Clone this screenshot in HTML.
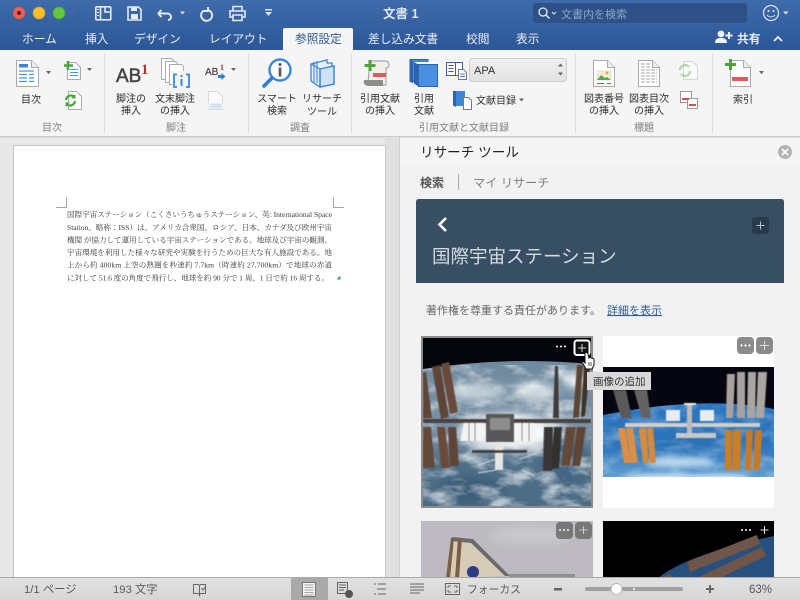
<!DOCTYPE html>
<html lang="ja"><head><meta charset="utf-8"><title>文書 1</title>
<style>
html,body{margin:0;padding:0;background:#fff}
body{width:800px;height:600px;overflow:hidden}
svg{display:block}
text{font-family:"Liberation Sans","Noto Sans CJK JP",sans-serif}
.t{font-size:11.7px;fill:#e9eef6}
.r{font-size:10px;fill:#2c2c2c;text-anchor:middle}
.g{font-size:10px;fill:#808080;text-anchor:middle}
.d{font-family:"Liberation Serif","Noto Serif CJK SC",serif;font-size:7.6px;fill:#3a3a3a}
.s{font-size:11.300px;fill:#5c5c5c}
</style></head><body>
<svg width="800" height="600" viewBox="0 0 800 600" xmlns="http://www.w3.org/2000/svg">
<defs>
<linearGradient id="tb" x1="0" y1="0" x2="0" y2="1"><stop offset="0" stop-color="#3f6bab"/><stop offset="1" stop-color="#2c5797"/></linearGradient>
<linearGradient id="st" x1="0" y1="0" x2="0" y2="1"><stop offset="0" stop-color="#e2e2e2"/><stop offset="1" stop-color="#d6d6d6"/></linearGradient>
<linearGradient id="sel" x1="0" y1="0" x2="0" y2="1"><stop offset="0" stop-color="#f0f0f0"/><stop offset="1" stop-color="#e2e2e2"/></linearGradient>
<linearGradient id="earth1" x1="0" y1="0" x2="0" y2="1"><stop offset="0" stop-color="#6b879d"/><stop offset=".55" stop-color="#7a92a6"/><stop offset=".75" stop-color="#4f7089"/><stop offset="1" stop-color="#4c6c85"/></linearGradient>
<linearGradient id="earth2" x1="0" y1="0" x2="0" y2="1"><stop offset="0" stop-color="#2a78c6"/><stop offset=".7" stop-color="#2b72b8"/><stop offset="1" stop-color="#5f9dd2"/></linearGradient>
<filter id="b3" x="-30%" y="-30%" width="160%" height="160%"><feGaussianBlur stdDeviation="3"/></filter>
<filter id="b5" x="-30%" y="-30%" width="160%" height="160%"><feGaussianBlur stdDeviation="5"/></filter>
<filter id="b1"><feGaussianBlur stdDeviation=".5"/></filter>
<filter id="cl" x="0" y="0" width="100%" height="100%" color-interpolation-filters="sRGB"><feTurbulence type="fractalNoise" baseFrequency=".035 .07" numOctaves="4" seed="7"/><feColorMatrix type="matrix" values="0 0 0 0 1  0 0 0 0 1  0 0 0 0 1  3 0 0 0 -1.300"/></filter>
<clipPath id="c1"><rect x="423" y="338" width="168" height="168"/></clipPath>
<clipPath id="c2"><rect x="603" y="367" width="171" height="110"/></clipPath>
<clipPath id="c3"><rect x="421" y="521" width="172" height="57"/></clipPath>
<clipPath id="c4"><rect x="603" y="521" width="171" height="57"/></clipPath>
</defs>

<!-- window backgrounds -->
<rect width="800" height="600" fill="#e8e8e8"/>
<rect x="0" y="0" width="800" height="50" fill="url(#tb)"/>
<rect x="0" y="50" width="800" height="86" fill="#f5f5f5"/>
<rect x="0" y="136" width="800" height="1.500" fill="#cbcbcb"/>
<!-- doc page -->
<rect x="385" y="137" width="15" height="441" fill="#e0e0e0"/>
<rect x="13.500" y="145.500" width="372" height="440" fill="#fff" stroke="#c6c6c6"/>
<!-- crop marks -->
<path d="M56 207.500H66.500V197M333.500 197V207.500H344" fill="none" stroke="#a8a8a8"/>
<!-- doc text -->
<text class="d" x="67" y="217" textLength="265">国際宇宙ステーション（こくさいうちゅうステーション、英: International Space</text>
<text class="d" x="67" y="230" textLength="265">Station、略称：ISS）は、アメリカ合衆国、ロシア、日本、カナダ及び欧州宇宙</text>
<text class="d" x="67" y="242.500" textLength="265">機関 が協力して運用している宇宙ステーションである。地球及び宇宙の観測、</text>
<text class="d" x="67" y="255" textLength="265">宇宙環境を利用した様々な研究や実験を行うための巨大な有人施設である。地</text>
<text class="d" x="67" y="267.500" textLength="265">上から約 400km 上空の熱圏を秒速約 7.7km（時速約 27,700km）で地球の赤道</text>
<text class="d" x="67" y="280.500" textLength="262">に対して 51.6 度の角度で飛行し、地球を約 90 分で 1 周、1 日で約 16 周する。</text>
<path d="M337 279h3v-3M340 279l-2-2" fill="none" stroke="#2f7fd0" stroke-width=".9"/>

<!-- title bar -->
<circle cx="19" cy="13" r="6" fill="#ee5f57" stroke="#cf4a44" stroke-width=".6"/><circle cx="19" cy="13" r="2" fill="#5f0f0c"/>
<circle cx="39" cy="13" r="6" fill="#f9bd2f" stroke="#d99f22" stroke-width=".6"/>
<circle cx="59" cy="13" r="6" fill="#5fc83e" stroke="#47a42c" stroke-width=".6"/>
<path d="M78.500 5V22" stroke="#3a6098"/>
<g fill="none" stroke="#e4e9f2" stroke-width="1.600">
<rect x="95.800" y="6.800" width="15" height="13" rx="1"/><path d="M100.500 7v13M105 7.500v4.500h5.500"/>
<path d="M128 7h10.500l2.500 2.500V20h-13z"/>
<path d="M158 13.500l3.500-3.500M158 13.500l3.500 3.500M158 13.500h9c5 0 5.500 6 1 6.500" stroke-width="1.900"/>
<path d="M204 10.500a5.500 5.500 0 1 0 4-.500M208 7v4h-4" stroke-width="1.900"/>
<path d="M233 11V6.500h9V11M233 17h-3v-6h15v6h-3M233 15h9v5.500h-9z"/>
</g>
<path d="M97 9.500h2M97 12.500h2M97 15.500h2" stroke="#e4e9f2"/>
<rect x="131" y="7" width="6" height="4" fill="#e4e9f2"/><rect x="131" y="14" width="7" height="5" fill="#e4e9f2"/>
<path d="M180 11.500h5l-2.500 3zM265 9h7v1.500h-7zM265 12h7l-3.500 4z" fill="#dbe2ee"/>
<text x="383" y="18" font-size="12.500" font-weight="bold" fill="#dfe6f2">文書 1</text>
<rect x="533" y="3" width="214" height="20" rx="3" fill="#2e5288"/>
<circle cx="543" cy="12" r="4" fill="none" stroke="#e4e9f2" stroke-width="1.300"/><path d="M546 15l3.500 3.500" stroke="#e4e9f2" stroke-width="1.500"/>
<path d="M552 12l2 2 2-2" fill="none" stroke="#e4e9f2"/>
<text x="561" y="18" font-size="11" fill="#8ea4c6">文書内を検索</text>
<circle cx="771" cy="13" r="7.500" fill="none" stroke="#dfe6f2" stroke-width="1.200"/>
<circle cx="768.500" cy="11" r="1" fill="#dfe6f2"/><circle cx="773.500" cy="11" r="1" fill="#dfe6f2"/>
<path d="M767 15c2 2.500 6 2.500 8 0" fill="none" stroke="#dfe6f2"/>
<path d="M783 11.500h5.500l-2.750 3z" fill="#dfe6f2"/>

<!-- tabs -->
<path d="M283 50V30q0-2 2-2h66q2 0 2 2v20z" fill="#f5f5f5"/>
<text class="t" x="22" y="43">ホーム</text>
<text class="t" x="85" y="43">挿入</text>
<text class="t" x="134" y="43">デザイン</text>
<text class="t" x="209" y="43">レイアウト</text>
<text x="295" y="43" font-size="11.700" fill="#2c5797">参照設定</text>
<text class="t" x="368" y="43">差し込み文書</text>
<text class="t" x="466" y="43">校閲</text>
<text class="t" x="516" y="43">表示</text>
<circle cx="721" cy="34" r="3.400" fill="#f0f3f8"/><path d="M715 43c0-4 2.500-5 6-5s6 1 6 5z" fill="#f0f3f8"/>
<path d="M729 33h2v2.500h2.500v2H731v2.500h-2v-2.500h-2.500v-2H729z" fill="#f0f3f8" transform="translate(-1,-1)"/>
<text class="t" x="737" y="43" font-weight="bold">共有</text>
<path d="M774 41l4-4 4 4" fill="none" stroke="#f0f3f8" stroke-width="1.800"/>

<!-- ribbon dividers -->
<path d="M104.500 54V133M248.500 54V133M351.500 54V133M575.500 54V133M712.500 54V133" stroke="#dddddd"/>

<!-- 目次 -->
<path d="M16.500 60.500h15l7 7v19h-22z" fill="#fff" stroke="#aaa"/><path d="M31.500 60.500v7h7" fill="#eee" stroke="#aaa"/>
<rect x="19" y="64" width="9" height="3.500" fill="#3b86dc"/>
<path d="M19 71h15M19 74.500h8M29 74.500h5M19 78h8M29 78h5M19 81.500h8M29 81.500h5" stroke="#4b93e3" stroke-width="1.200"/>
<path d="M46 71h5l-2.500 3.200z" fill="#666"/>
<path d="M67.500 62.500h8l5 5v12h-13z" fill="#fff" stroke="#aaa"/>
<path d="M70 69.500h8M70 72.500h8M70 75.500h8" stroke="#4b93e3"/>
<path d="M68 61v9M64 65.500h9" stroke="#4ca33e" stroke-width="2.500"/>
<path d="M87 68h5l-2.500 3z" fill="#666"/>
<path d="M68.500 91.500h8l5 5v13h-13z" fill="#fff" stroke="#aaa"/>
<path d="M66 100a5 5 0 0 1 8.500-3M75 101a5 5 0 0 1-8.500 3" fill="none" stroke="#4ca33e" stroke-width="2.200"/>
<path d="M75.500 94v4.500H71M65.500 107v-4.500H70" fill="#4ca33e"/>
<text class="r" x="31" y="103" font-size="10">目次</text>
<text class="g" x="52" y="131">目次</text>

<!-- 脚注 -->
<text x="116" y="82" font-size="19" fill="#444" stroke="#444" stroke-width=".5" style="font-family:'Liberation Sans',sans-serif">AB</text>
<text x="141" y="74" font-size="15" font-weight="bold" fill="#a83a35" style="font-family:'Liberation Serif',serif">1</text>
<text class="r" x="131" y="102">脚注の</text><text class="r" x="131" y="114">挿入</text>
<g fill="#fff" stroke="#aaa"><path d="M161.500 58.500h10l2 2v19h-12z"/><path d="M165.500 61.500h10l2 2v19h-12z"/><path d="M169.500 64.500h12l2 2v18h-14z"/></g>
<rect x="172" y="71" width="18" height="18" fill="#f5f5f5"/>
<path d="M177 74.500h-3v12.500h3M186 74.500h3v12.500h-3" fill="none" stroke="#3b86dc" stroke-width="1.800"/>
<path d="M181.500 75v2M181.500 79v7" stroke="#3b86dc" stroke-width="2"/>
<text class="r" x="175" y="102">文末脚注</text><text class="r" x="175" y="114">の挿入</text>
<text x="205" y="75" font-size="10" fill="#444" stroke="#444" stroke-width=".2" style="font-family:'Liberation Sans',sans-serif">AB</text>
<text x="220" y="70" font-size="8" font-weight="bold" fill="#a83a35" style="font-family:'Liberation Serif',serif">1</text>
<path d="M218 75h3.500v-2l4 3.500-4 3.500v-2H218z" fill="#2f7fd8"/>
<path d="M231 68h5l-2.500 3z" fill="#666"/>
<path d="M208.500 91.500h9l5 5v13h-14z" fill="#fbfbfb" stroke="#d8d8d8"/>
<rect x="208" y="103" width="15" height="6" fill="#e6eef8"/><path d="M211 105h10M211 107h10" stroke="#bcd0ea" stroke-width=".8"/>
<text class="g" x="176" y="131">脚注</text>

<!-- 調査 -->
<circle cx="280" cy="70" r="10.500" fill="#fff" stroke="#3b86dc" stroke-width="2.400"/>
<path d="M272 78l-8 8" stroke="#2f7fd0" stroke-width="3.600" stroke-linecap="round"/>
<circle cx="280" cy="64.500" r="1.500" fill="#555"/><path d="M280 67.500v9" stroke="#555" stroke-width="2.600"/>
<text class="r" x="277" y="102">スマート</text><text class="r" x="277" y="114">検索</text>
<path d="M311 64l16-4v3l5 0v3l2 0v18l-14 3-9-6z" fill="#e6f0fb" stroke="#3b86dc" stroke-width="1.300"/>
<path d="M314 62v20M317 61v22" stroke="#3b86dc" fill="none" stroke-width="1.100"/>
<path d="M320 69l14-3v18l-14 3z" fill="#cfe2f8" stroke="#3b86dc" stroke-width="1.400"/>
<path d="M311 64l9 5v18" fill="none" stroke="#3b86dc" stroke-width="1.200"/>
<text class="r" x="322" y="102">リサーチ</text><text class="r" x="322" y="115">ツール</text>
<text class="g" x="300" y="131">調査</text>

<!-- 引用文献 -->
<path d="M370 61h15c3 0 4 2 4 4s-1 3-3 3v17H368c-3 0-4-2-4-3h4z" fill="#efeeea" stroke="#999"/>
<path d="M364 80h19v6h-15c-3 0-4-3-4-6z" fill="#8e8e8a"/>
<path d="M370 60v11M364.500 65.500h11" stroke="#4ca33e" stroke-width="3"/>
<rect x="373" y="73" width="13" height="4" fill="#dc5a5a"/>
<text class="r" x="380" y="102">引用文献</text><text class="r" x="380" y="114">の挿入</text>
<rect x="410" y="59.500" width="18" height="22" fill="#4388d8" stroke="#2c64ae"/>
<path d="M410 59.500v22l3 2v-22z" fill="#2c64ae"/>
<path d="M414 62h23v2h-23z" fill="#fff"/>
<rect x="418.500" y="64.500" width="19" height="22" fill="#4a90e2" stroke="#2c64ae"/>
<path d="M414 62l4.500 2.500v22l-4.500-3z" fill="#2c64ae"/>
<text class="r" x="424" y="102">引用</text><text class="r" x="424" y="114">文献</text>
<rect x="446.500" y="62.500" width="9" height="13" fill="#fff" stroke="#2f62a8"/><rect x="455.500" y="62.500" width="7" height="13" fill="#fff" stroke="#2f62a8"/>
<path d="M448.500 65.500h5M448.500 68.500h5M448.500 71.500h5" stroke="#555" stroke-width=".9"/>
<path d="M458.500 69.500h5l3 3v7h-8z" fill="#fff" stroke="#777"/><path d="M460 74h5M460 76.500h5" stroke="#3b86dc"/>
<rect x="469.500" y="58.500" width="97" height="23" rx="3" fill="url(#sel)" stroke="#cfcfcf"/>
<text x="474" y="74" font-size="11" fill="#333" style="font-family:'Liberation Sans',sans-serif">APA</text>
<path d="M558 66.500l2.500-3 2.500 3zM558 72.500l2.500 3 2.500-3z" fill="#666"/>
<rect x="453" y="91" width="12" height="15" fill="#3f86d8"/><path d="M453 91v14l3 2V91z" fill="#2c64ae"/>
<path d="M463.500 97.500h5l3 3v9h-8z" fill="#fff" stroke="#777"/>
<text x="476" y="104" font-size="10" fill="#333">文献目録</text>
<path d="M519 98.500h5l-2.500 3z" fill="#666"/>
<text class="g" x="464" y="131">引用文献と文献目録</text>

<!-- 標題 -->
<path d="M593.500 60.500h14l7 7v19h-21z" fill="#fff" stroke="#aaa"/><path d="M607.500 60.500v7h7" fill="#eee" stroke="#aaa"/>
<rect x="597" y="71" width="14" height="9" fill="#f3ecd8" stroke="#ccc" stroke-width=".5"/><path d="M597 80l4-5 4 3 2-1 4 3z" fill="#5aa84d"/><circle cx="607" cy="73" r="1.400" fill="#e9a93a"/>
<path d="M597 83.500h7M607 83.500h4" stroke="#d04a4a"/>
<text class="r" x="604" y="102">図表番号</text><text class="r" x="604" y="114">の挿入</text>
<path d="M638.500 60.500h14l7 7v19h-21z" fill="#fff" stroke="#aaa"/><path d="M652.500 60.500v7h7" fill="#eee" stroke="#aaa"/>
<path d="M641 64h9M641 67h9M641 70h16M641 73h16M641 76h16M641 79h16M641 82h16" stroke="#a8a8a8" stroke-dasharray="4 1"/>
<text class="r" x="649" y="102">図表目次</text><text class="r" x="649" y="114">の挿入</text>
<path d="M683.500 61.500h9l5 5v13h-14z" fill="#fbfbfb" stroke="#d5d5d5"/>
<path d="M680 70a5 5 0 0 1 9-3M690 71a5 5 0 0 1-9 3" fill="none" stroke="#aed6a6" stroke-width="2.200"/>
<rect x="680.500" y="91.500" width="11" height="11" fill="#fff" stroke="#999"/><rect x="687.500" y="98.500" width="10" height="10" fill="#fff" stroke="#999"/>
<path d="M682 99h7M689 105h7" stroke="#dc4a4a" stroke-width="2"/>
<text class="g" x="644" y="131">標題</text>

<!-- 索引 -->
<path d="M730.500 60.500h13l7 7v19h-20z" fill="#fff" stroke="#aaa"/><path d="M743.500 60.500v7h7" fill="#eee" stroke="#aaa"/>
<path d="M730.500 59v11M725 64.500h11" stroke="#4ca33e" stroke-width="3"/>
<rect x="732" y="77" width="16" height="4" fill="#dc5a5a"/>
<path d="M759 71h5l-2.500 3.200z" fill="#666"/>
<text class="r" x="743" y="103">索引</text>

<!-- panel -->
<rect x="400" y="137.500" width="400" height="441" fill="#f2f2f2"/>
<rect x="400" y="137.500" width="400" height="28" fill="#f5f5f5"/>
<path d="M399.500 137V578" stroke="#d2d2d2"/>
<text x="420" y="157" font-size="13.600" fill="#222">リサーチ ツール</text>
<circle cx="785" cy="152" r="7" fill="#b5b5b5"/><path d="M782 149l6 6M788 149l-6 6" stroke="#fff" stroke-width="1.700"/>
<text x="420" y="187" font-size="12" font-weight="bold" fill="#555">検索</text>
<path d="M458.500 174V190" stroke="#aaa"/>
<text x="473" y="187" font-size="12.200" fill="#808080">マイ リサーチ</text>
<path d="M416 283V202q0-3 3-3h362q3 0 3 3v81z" fill="#374e63"/>
<path d="M446 218l-6.500 6.500 6.500 6.500" fill="none" stroke="#fff" stroke-width="2.600"/>
<rect x="752" y="217" width="17" height="17" rx="3" fill="#283a4b"/><path d="M760.500 221.500v8M756.500 225.500h8" stroke="#b6c0ca"/>
<text x="432" y="263" font-size="18.500" fill="#d3dbe2">国際宇宙ステーション</text>
<text x="426" y="314" font-size="11" fill="#666">著作権を尊重する責任があります。</text>
<text x="607" y="314" font-size="11" fill="#2b5f98" text-decoration="underline">詳細を表示</text>

<!-- image 1 -->
<rect x="421" y="336" width="172" height="172" fill="#8c8c8c"/>
<g clip-path="url(#c1)">
<rect x="423" y="338" width="168" height="168" fill="url(#earth1)"/>
<g filter="url(#b5)" fill="#e8edf0">
<ellipse cx="475" cy="392" rx="30" ry="8" fill="#c9d4dc"/><ellipse cx="535" cy="392" rx="22" ry="10" fill="#cfd9df"/><ellipse cx="510" cy="432" rx="48" ry="18" fill="#f2f4f5"/><ellipse cx="575" cy="380" rx="12" ry="8"/>
<ellipse cx="470" cy="490" rx="34" ry="14" fill="#3d5d78"/><ellipse cx="565" cy="462" rx="26" ry="24" fill="#446683"/>
</g>
<rect x="423" y="365" width="168" height="141" filter="url(#cl)" opacity=".6"/>
<path d="M423 338h168v26q-84-8-168 5z" fill="#05060c"/>
<g filter="url(#b1)">
<path d="M432 367l8-2 9 52-8 2z" fill="#5f4537"/><path d="M441 364l8-2 9 50-8 2z" fill="#6a4c3b"/>
<path d="M423 372l3 0 6 46-9 0z" fill="#5f4537"/>
<path d="M423 427h8l4 41h-12z" fill="#644839"/><path d="M437 427h8l5 41h-9z" fill="#6a4c3b"/><path d="M448 427h8l3 39h-9z" fill="#5f4537"/>
<path d="M555 366l3-0 1 52-6 0z" fill="#3f3a38"/><path d="M577 365l6 0-4 52-6 1z" fill="#5c4434"/><path d="M584 366l6 0-5 50-4 1z" fill="#3f3028"/>
<path d="M544 427h9l-1 44-9 0z" fill="#3a3636"/><path d="M554 427h8l-3 41-8 1z" fill="#33302f"/><path d="M566 427h10l-6 39-9 0z" fill="#644839"/><path d="M577 427h9l-6 39-8 0z" fill="#5e4434"/>
<path d="M464 423h20l-2 18h-22zM515 423h18l5 18h-20z" fill="#f3f3f3"/>
<path d="M469 423v18M475 423v18M522 423v18M529 423v18" stroke="#777" stroke-width="1"/>
<rect x="423" y="419" width="168" height="4" fill="#4a4340"/>
<rect x="486" y="414" width="28" height="28" fill="#565658"/><rect x="490" y="418" width="20" height="12" fill="#8d8d8e"/>
<rect x="495" y="442" width="8" height="28" fill="#e8e6e2"/><rect x="472" y="450" width="55" height="3" fill="#404044"/>
<path d="M478 465l18-6M478 473l18-3M520 459l17-6M522 470l13 6" stroke="#cfd6dc" stroke-width="1"/>
</g>
</g>
<circle cx="557" cy="346.500" r="1" fill="#fff"/><circle cx="561" cy="346.500" r="1" fill="#fff"/><circle cx="565" cy="346.500" r="1" fill="#fff"/>
<rect x="574.500" y="340.500" width="15" height="14.500" rx="2.500" fill="#111" stroke="#fff" stroke-width="2"/>
<path d="M582 344v8M578 348h8" stroke="#d8d8d8"/>
<!-- image 2 -->
<rect x="603" y="336" width="171" height="172" fill="#fff"/>
<g clip-path="url(#c2)">
<rect x="603" y="367" width="171" height="110" fill="url(#earth2)"/>
<rect x="603" y="405" width="171" height="72" filter="url(#cl)" opacity=".3"/>
<path d="M603 367h171v42q-70-14-171 6z" fill="#05060f"/>
<g filter="url(#b3)" fill="#bcd8ee"><ellipse cx="680" cy="462" rx="34" ry="5"/><ellipse cx="720" cy="478" rx="30" ry="4" fill="#d6e6f2"/><ellipse cx="660" cy="478" rx="36" ry="4" fill="#d6e6f2"/></g>
<g filter="url(#b1)">
<path d="M613 390h8l7 28h-7zM621 390h5l6 28h-6z" fill="#5a5a5a"/><path d="M634 390h8l7 28h-7zM642 390h5l4 28h-5z" fill="#646464"/>
<path d="M618 428h7l6 35h-7zM626 428h7l5 35h-7z" fill="#d98f45"/><path d="M639 428h7l3 35h-6zM647 428h6l3 35h-6z" fill="#d68a3c"/>
<path d="M727 374h8l-2 44h-7zM737 372h8v46h-8z" fill="#a7a29d"/><path d="M748 372h8l-1 46h-8zM758 372h9l-3 46h-8z" fill="#a9a5a0"/>
<path d="M725 430h7l-1 40h-6zM733 430h8l-1 40h-8z" fill="#cb7e24"/><path d="M746 430h7l-2 40h-6zM755 430h7l-2 40h-7z" fill="#c67a26"/>
<rect x="625" y="423" width="135" height="4" fill="#d0cfcb"/>
<rect x="666" y="410" width="14" height="11" fill="#e8edf2"/><rect x="700" y="410" width="14" height="11" fill="#e8edf2"/>
<rect x="687" y="403" width="5" height="34" fill="#bbb"/><rect x="676" y="433" width="40" height="5" fill="#c8c8c6"/><rect x="684" y="403" width="12" height="2" fill="#eee"/>
</g>
</g>
<rect x="737" y="337" width="17" height="17" rx="4" fill="#8a8a8a"/><rect x="756" y="337" width="17" height="17" rx="4" fill="#8a8a8a"/>
<circle cx="741.500" cy="345.500" r="1.100" fill="#fff"/><circle cx="745.500" cy="345.500" r="1.100" fill="#fff"/><circle cx="749.500" cy="345.500" r="1.100" fill="#fff"/>
<path d="M764.500 341v9M760 345.500h9" stroke="#ddd"/>
<!-- tooltip -->
<rect x="587" y="372" width="64" height="18" fill="#d9d9d9"/>
<text x="593" y="385" font-size="10.500" fill="#333">画像の追加</text>
<!-- hand cursor -->
<path d="M585 353c1-1 2-1 3 1l1 4 1-1 1 1 1-0 2 1v6l-2 4h-6l-4-7c0-1 1-1 2 0l1 1z" fill="#fff" stroke="#111" stroke-width="1"/>
<path d="M589 362v4M591 362v4" stroke="#111" stroke-width=".7"/>
<!-- image 3 -->
<g clip-path="url(#c3)">
<rect x="421" y="521" width="172" height="57" fill="#bdbbc1"/>
<g filter="url(#b5)"><ellipse cx="530" cy="535" rx="40" ry="8" fill="#cbc9cd"/></g>
<path d="M452 537l21 2 37 37-64 2z" fill="#d7cab6"/>
<path d="M452 537l21 2 37 37h-5l-34-33-19-2z" fill="#6b6b6d"/>
<path d="M451 538l-5 40h4l4-40zM458 538l-3 40h4l3-40z" fill="#7a5f48"/>
<circle cx="473" cy="572" r="6" fill="#2c3b86"/>
<rect x="509" y="574" width="66" height="4" fill="#8f8f8f"/>
</g>
<rect x="556" y="522" width="17" height="17" rx="4" fill="#777"/><rect x="575" y="522" width="17" height="17" rx="4" fill="#777"/>
<circle cx="560" cy="530" r="1.100" fill="#ddd"/><circle cx="564" cy="530" r="1.100" fill="#ddd"/><circle cx="568" cy="530" r="1.100" fill="#ddd"/>
<path d="M583.500 526v8M579.500 530h8" stroke="#ccc"/>
<!-- image 4 -->
<g clip-path="url(#c4)">
<rect x="603" y="521" width="171" height="57" fill="#000"/>
<path d="M658 578q30-24 116-42v42z" fill="#27507f"/>
<path d="M687 562l70-27 3 9-70 28zM697 578l65-31 4 9-46 22z" fill="#6f5648"/>
<path d="M660 578l10-4 4 4z" fill="#6f5648"/>
</g>
<circle cx="742" cy="530" r="1" fill="#fff"/><circle cx="746" cy="530" r="1" fill="#fff"/><circle cx="750" cy="530" r="1" fill="#fff"/>
<path d="M764.500 526v8M760.500 530h8" stroke="#e5e5e5"/>

<!-- status bar -->
<rect x="0" y="577" width="800" height="23" fill="url(#st)"/>
<rect x="0" y="577" width="800" height="1" fill="#a9a9a9"/>
<text class="s" x="24" y="593">1/1 ページ</text>
<text class="s" x="113" y="593">193 文字</text>
<path d="M193.500 584.500h5l1 1 1-1h5v9h-5l-1 1-1-1h-5zM199.500 585.500v11" fill="none" stroke="#666"/><path d="M201.500 588l1.500 2 3-4" fill="none" stroke="#666"/>
<rect x="291" y="578" width="37" height="22" fill="#a9a9a9"/>
<rect x="302.500" y="582.500" width="13" height="14" fill="#f4f4f4" stroke="#777"/><path d="M304.500 585h9M304.500 587.500h9M304.500 590h9M304.500 592.500h9M304.500 595h9" stroke="#888" stroke-width=".8"/>
<rect x="337.500" y="582.500" width="10" height="11" fill="none" stroke="#666"/><path d="M339 585h7M339 587.500h7M339 590h5" stroke="#666"/><circle cx="349" cy="594" r="4" fill="#555"/>
<path d="M374 584h2M378 584h8M377 589h9M374 594h2M378 594h8" stroke="#666"/>
<path d="M410 584h14M410 587h14M410 590h14M410 593h10" stroke="#666"/>
<rect x="445.500" y="583.500" width="14" height="11" fill="none" stroke="#666"/><path d="M448 586h3M448 586v2M457 586h-3M457 586v2M448 592h3M448 592v-2M457 592h-3M457 592v-2" stroke="#666" fill="none"/>
<text x="467" y="593" font-size="10.800" fill="#5c5c5c">フォーカス</text>
<rect x="554" y="588" width="8" height="2.500" fill="#666"/>
<rect x="585" y="587" width="98" height="4" rx="2" fill="#a0a0a0"/>
<circle cx="634" cy="589" r="1" fill="#fff"/>
<circle cx="616.500" cy="589" r="5.500" fill="#fff" stroke="#aaa" stroke-width=".7"/>
<path d="M710 585v8M706 589h8" stroke="#666" stroke-width="2"/>
<text x="749" y="593" font-size="11.500" fill="#555" style="font-family:'Liberation Sans',sans-serif">63%</text>
</svg>
</body></html>
